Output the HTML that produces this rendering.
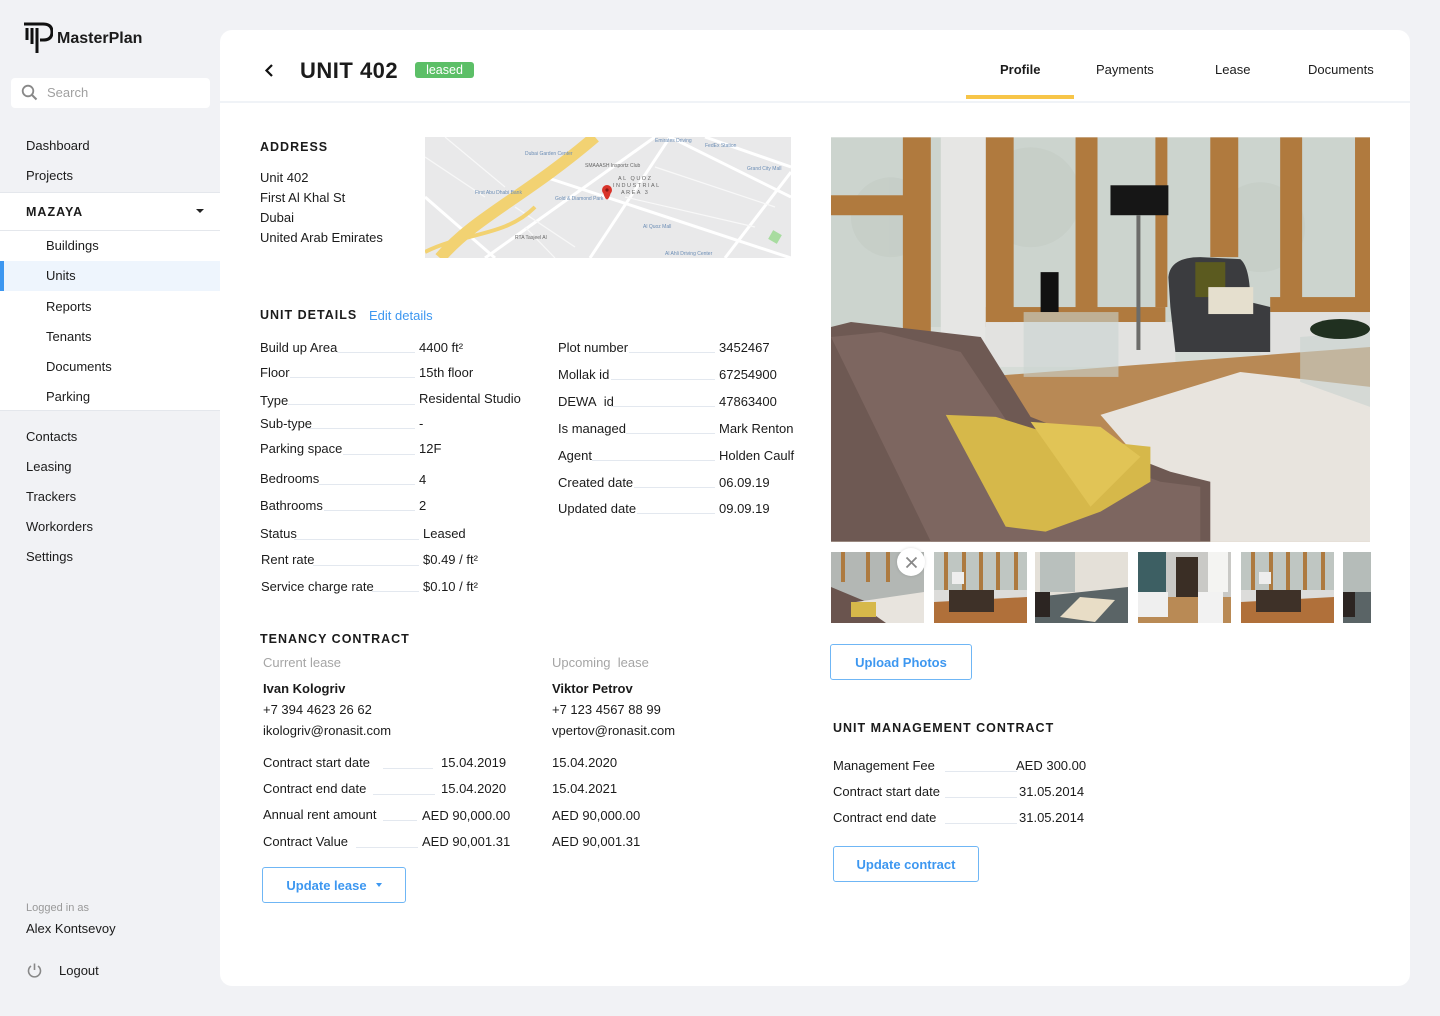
<!DOCTYPE html>
<html><head><meta charset="utf-8">
<style>
*{margin:0;padding:0;box-sizing:border-box}
body{width:1440px;height:1016px;background:#f1f2f5;font-family:"Liberation Sans",Arial,sans-serif;color:#1b1b1b;position:relative;overflow:hidden}
.t{position:absolute;white-space:nowrap;font-size:13px;line-height:18px;margin-top:1px}
.h{position:absolute;white-space:nowrap;font-size:12.5px;font-weight:bold;letter-spacing:1px;line-height:18px;margin-top:1px}
.ln{position:absolute;height:1px;background:#e3e8ef}
.btn{position:absolute;border:1px solid #6fb6f5;border-radius:3px;color:#3d97f0;font-weight:bold;font-size:13px;display:flex;align-items:center;justify-content:center;background:#fff}
.card{position:absolute;left:220px;top:30px;width:1190px;height:956px;background:#fff;border-radius:12px}
.g{color:#9a9a9a}
</style></head><body>

<!-- Sidebar -->
<svg style="position:absolute;left:23px;top:22px" width="30" height="32" viewBox="0 0 30 32">
<path d="M1 2 H20 Q29 2 29 10 Q29 18 20 18 H17" fill="none" stroke="#111" stroke-width="3"/>
<path d="M4 6 V18 M9 6 V22 M14 6 V31" stroke="#111" stroke-width="3"/>
</svg>
<div class="t" style="left:57px;top:29px;font-size:16px;font-weight:bold">MasterPlan</div>
<div style="position:absolute;left:11px;top:78px;width:199px;height:30px;background:#fff;border-radius:4px"></div>
<svg style="position:absolute;left:21px;top:84px" width="17" height="17" viewBox="0 0 17 17"><circle cx="7" cy="7" r="5.3" fill="none" stroke="#888" stroke-width="1.8"/><path d="M11 11 L15.5 15.5" stroke="#888" stroke-width="2"/></svg>
<div class="t g" style="left:47px;top:83px;color:#a0a0a0">Search</div>
<div class="t" style="left:26px;top:136px">Dashboard</div>
<div class="t" style="left:26px;top:166px">Projects</div>
<div style="position:absolute;left:0;top:192px;width:220px;height:219px;background:#fff;border-top:1px solid #e4e7ec;border-bottom:1px solid #e4e7ec"></div>
<div style="position:absolute;left:0;top:230px;width:220px;height:1px;background:#e4e7ec"></div>
<div class="h" style="left:26px;top:202px">MAZAYA</div>
<div style="position:absolute;left:196px;top:209px;border-left:4px solid transparent;border-right:4px solid transparent;border-top:4px solid #222"></div>
<div style="position:absolute;left:0;top:261px;width:220px;height:30px;background:#eef5fd"></div>
<div style="position:absolute;left:0;top:261px;width:4px;height:30px;background:#3d97f0"></div>
<div class="t" style="left:46px;top:236px">Buildings</div>
<div class="t" style="left:46px;top:266px">Units</div>
<div class="t" style="left:46px;top:297px">Reports</div>
<div class="t" style="left:46px;top:327px">Tenants</div>
<div class="t" style="left:46px;top:357px">Documents</div>
<div class="t" style="left:46px;top:387px">Parking</div>
<div class="t" style="left:26px;top:427px">Contacts</div>
<div class="t" style="left:26px;top:457px">Leasing</div>
<div class="t" style="left:26px;top:487px">Trackers</div>
<div class="t" style="left:26px;top:517px">Workorders</div>
<div class="t" style="left:26px;top:547px">Settings</div>
<div class="t" style="left:26px;top:898px;font-size:11px;color:#999">Logged in as</div>
<div class="t" style="left:26px;top:919px">Alex Kontsevoy</div>
<svg style="position:absolute;left:26px;top:962px" width="17" height="17" viewBox="0 0 17 17"><path d="M5 4 A6 6 0 1 0 12 4" fill="none" stroke="#888" stroke-width="1.6"/><path d="M8.5 1.5 V8" stroke="#888" stroke-width="1.6"/></svg>
<div class="t" style="left:59px;top:961px">Logout</div>

<!-- Card -->
<div class="card"></div>
<div style="position:absolute;left:220px;top:101px;width:1190px;height:2px;background:#f0f3f7"></div>
<svg style="position:absolute;left:263px;top:63px" width="12" height="15" viewBox="0 0 12 15"><path d="M9 2 L3.5 7.5 L9 13" fill="none" stroke="#111" stroke-width="2.2"/></svg>
<div class="t" style="left:300px;top:56px;font-size:22px;line-height:28px;font-weight:bold;letter-spacing:0.5px">UNIT 402</div>
<div style="position:absolute;left:415px;top:62px;width:59px;height:16px;background:#5cbf67;border-radius:3px;color:#fff;font-size:12.5px;line-height:16px;text-align:center">leased</div>
<div class="t" style="left:1000px;top:60px;font-weight:bold">Profile</div>
<div class="t" style="left:1096px;top:60px">Payments</div>
<div class="t" style="left:1215px;top:60px">Lease</div>
<div class="t" style="left:1308px;top:60px">Documents</div>
<div style="position:absolute;left:966px;top:95px;width:108px;height:4px;background:#f7c548"></div>

<!-- Address -->
<div class="h" style="left:260px;top:137px">ADDRESS</div>
<div class="t" style="left:260px;top:168px">Unit 402</div>
<div class="t" style="left:260px;top:188px">First Al Khal St</div>
<div class="t" style="left:260px;top:208px">Dubai</div>
<div class="t" style="left:260px;top:228px">United Arab Emirates</div>
<svg style="position:absolute;left:425px;top:137px" width="366" height="121" viewBox="0 0 366 121">
<rect width="366" height="121" fill="#e9e9ea"/>
<g stroke="#fff" stroke-width="3" fill="none">
<path d="M60 121 L230 0"/><path d="M165 121 L245 0"/><path d="M300 121 L366 35"/>
<path d="M0 60 L70 121"/><path d="M120 40 L366 121"/><path d="M245 0 L366 60"/>
<path d="M280 0 L366 30"/>
</g>
<g stroke="#f8f8f8" stroke-width="1.2" fill="none">
<path d="M0 20 L60 60"/><path d="M20 0 L80 50"/><path d="M90 70 L150 110"/><path d="M200 60 L330 90"/><path d="M230 30 L350 70"/><path d="M100 90 L130 121"/>
</g>
<path d="M15 121 C50 80 100 60 170 0" fill="none" stroke="#f2d272" stroke-width="12"/>
<path d="M0 115 C40 95 80 100 110 70" fill="none" stroke="#f2d272" stroke-width="4"/>
<rect x="345" y="95" width="10" height="10" fill="#a8dca0" transform="rotate(30 350 100)"/>
<g font-family="Liberation Sans" font-size="5" fill="#6b8db5">
<text x="100" y="18">Dubai Garden Center</text><text x="50" y="57">First Abu Dhabi Bank</text>
<text x="130" y="63">Gold &amp; Diamond Park</text><text x="230" y="5">Emirates Driving</text>
<text x="280" y="10">FedEx Station</text><text x="322" y="33">Grand City Mall</text>
<text x="218" y="91">Al Quoz Mall</text><text x="240" y="118">Al Ahli Driving Center</text>
</g>
<g font-family="Liberation Sans" font-size="5" fill="#666"><text x="160" y="30">SMAAASH Insportz Club</text><text x="90" y="102">RTA Tasjeel Al</text>
<text x="193" y="43" letter-spacing="1.5" font-size="5.5">AL QUOZ</text><text x="188" y="50" letter-spacing="1.5" font-size="5.5">INDUSTRIAL</text><text x="196" y="57" letter-spacing="1.5" font-size="5.5">AREA 3</text></g>
<path d="M178 55 Q182 70 186 55" fill="#d9342b"/>
<circle cx="182" cy="53" r="5" fill="#d9342b"/><circle cx="182" cy="53" r="1.6" fill="#8a1a15"/>
</svg>

<!-- Unit details -->
<div class="h" style="left:260px;top:305px">UNIT DETAILS</div>
<div class="t" style="left:369px;top:306px;color:#3d97f0">Edit details</div>

<div class="t" style="left:260px;top:338px">Build up Area</div><div class="ln" style="left:337px;top:352px;width:78px"></div><div class="t" style="left:419px;top:338px">4400 ft²</div>
<div class="t" style="left:260px;top:363px">Floor</div><div class="ln" style="left:290px;top:377px;width:125px"></div><div class="t" style="left:419px;top:363px">15th floor</div>
<div class="t" style="left:260px;top:391px">Type</div><div class="ln" style="left:288px;top:404px;width:127px"></div><div class="t" style="left:419px;top:389px">Residental Studio</div>
<div class="t" style="left:260px;top:414px">Sub-type</div><div class="ln" style="left:306px;top:428px;width:109px"></div><div class="t" style="left:419px;top:414px">-</div>
<div class="t" style="left:260px;top:439px">Parking space</div><div class="ln" style="left:343px;top:454px;width:72px"></div><div class="t" style="left:419px;top:439px">12F</div>
<div class="t" style="left:260px;top:469px">Bedrooms</div><div class="ln" style="left:319px;top:484px;width:96px"></div><div class="t" style="left:419px;top:470px">4</div>
<div class="t" style="left:260px;top:496px">Bathrooms</div><div class="ln" style="left:324px;top:510px;width:91px"></div><div class="t" style="left:419px;top:496px">2</div>
<div class="t" style="left:260px;top:524px">Status</div><div class="ln" style="left:294px;top:539px;width:125px"></div><div class="t" style="left:423px;top:524px">Leased</div>
<div class="t" style="left:261px;top:550px">Rent rate</div><div class="ln" style="left:313px;top:565px;width:106px"></div><div class="t" style="left:423px;top:550px">$0.49 / ft²</div>
<div class="t" style="left:261px;top:577px">Service charge rate</div><div class="ln" style="left:372px;top:591px;width:47px"></div><div class="t" style="left:423px;top:577px">$0.10 / ft²</div>

<div class="t" style="left:558px;top:338px">Plot number</div><div class="ln" style="left:629px;top:352px;width:86px"></div><div class="t" style="left:719px;top:338px">3452467</div>
<div class="t" style="left:558px;top:365px">Mollak id</div><div class="ln" style="left:611px;top:379px;width:104px"></div><div class="t" style="left:719px;top:365px">67254900</div>
<div class="t" style="left:558px;top:392px">DEWA&nbsp; id</div><div class="ln" style="left:611px;top:406px;width:104px"></div><div class="t" style="left:719px;top:392px">47863400</div>
<div class="t" style="left:558px;top:419px">Is managed</div><div class="ln" style="left:626px;top:433px;width:89px"></div><div class="t" style="left:719px;top:419px">Mark Renton</div>
<div class="t" style="left:558px;top:446px">Agent</div><div class="ln" style="left:592px;top:460px;width:123px"></div><div class="t" style="left:719px;top:446px">Holden Caulf</div>
<div class="t" style="left:558px;top:473px">Created date</div><div class="ln" style="left:634px;top:487px;width:81px"></div><div class="t" style="left:719px;top:473px">06.09.19</div>
<div class="t" style="left:558px;top:499px">Updated date</div><div class="ln" style="left:637px;top:513px;width:78px"></div><div class="t" style="left:719px;top:499px">09.09.19</div>

<!-- Tenancy -->
<div class="h" style="left:260px;top:629px">TENANCY CONTRACT</div>
<div class="t" style="left:263px;top:653px;color:#a5a5a5">Current lease</div>
<div class="t" style="left:552px;top:653px;color:#a5a5a5">Upcoming&nbsp; lease</div>
<div class="t" style="left:263px;top:679px;font-weight:bold">Ivan Kologriv</div>
<div class="t" style="left:552px;top:679px;font-weight:bold">Viktor Petrov</div>
<div class="t" style="left:263px;top:700px">+7 394 4623 26 62</div>
<div class="t" style="left:552px;top:700px">+7 123 4567 88 99</div>
<div class="t" style="left:263px;top:721px">ikologriv@ronasit.com</div>
<div class="t" style="left:552px;top:721px">vpertov@ronasit.com</div>
<div class="t" style="left:263px;top:753px">Contract start date</div><div class="ln" style="left:383px;top:768px;width:50px"></div><div class="t" style="left:441px;top:753px">15.04.2019</div><div class="t" style="left:552px;top:753px">15.04.2020</div>
<div class="t" style="left:263px;top:779px">Contract end date</div><div class="ln" style="left:373px;top:794px;width:62px"></div><div class="t" style="left:441px;top:779px">15.04.2020</div><div class="t" style="left:552px;top:779px">15.04.2021</div>
<div class="t" style="left:263px;top:805px">Annual rent amount</div><div class="ln" style="left:383px;top:820px;width:34px"></div><div class="t" style="left:422px;top:806px">AED 90,000.00</div><div class="t" style="left:552px;top:806px">AED 90,000.00</div>
<div class="t" style="left:263px;top:832px">Contract Value</div><div class="ln" style="left:356px;top:847px;width:62px"></div><div class="t" style="left:422px;top:832px">AED 90,001.31</div><div class="t" style="left:552px;top:832px">AED 90,001.31</div>
<div class="btn" style="left:262px;top:867px;width:144px;height:36px">Update lease<span style="display:inline-block;margin-left:9px;border-left:3.5px solid transparent;border-right:3.5px solid transparent;border-top:4px solid #3d97f0"></span></div>

<!-- Photo -->
<svg style="position:absolute;left:831px;top:137px" width="539" height="405" viewBox="0 0 540 405">
<rect width="540" height="405" fill="#d6dcd7"/>
<rect x="0" y="0" width="540" height="190" fill="#ccd4ce"/>
<g fill="#c3cbc5" opacity=".6"><circle cx="60" cy="80" r="40"/><circle cx="200" cy="60" r="50"/><circle cx="430" cy="90" r="45"/></g>
<g fill="#b07a3e">
<rect x="0" y="58" width="78" height="20"/><rect x="72" y="0" width="28" height="195"/>
<rect x="155" y="0" width="28" height="190"/><rect x="245" y="0" width="22" height="175"/>
<rect x="325" y="0" width="12" height="170"/><rect x="380" y="0" width="28" height="120"/>
<rect x="450" y="0" width="22" height="175"/><rect x="525" y="0" width="15" height="180"/>
<rect x="155" y="170" width="180" height="15"/><rect x="440" y="160" width="100" height="15"/>
</g>
<rect x="110" y="0" width="45" height="240" fill="#e6e6e4"/>
<rect x="155" y="185" width="190" height="45" fill="#e2e2e0"/>
<rect x="430" y="175" width="110" height="55" fill="#e0e0de"/>
<polygon points="150,240 540,210 540,405 0,405" fill="#b88955"/>
<polygon points="270,278 410,235 540,250 540,405 380,405" fill="#e8e4de"/>
<rect x="280" y="48" width="58" height="30" fill="#161616"/>
<rect x="306" y="78" width="4" height="135" fill="#6c6c6a"/>
<rect x="210" y="135" width="18" height="40" fill="#111"/>
<rect x="193" y="175" width="95" height="65" fill="#c9d3d0" opacity=".6"/>
<path d="M338 140 Q340 120 370 120 L410 122 Q420 130 420 165 L440 170 L440 215 L345 215 L340 170 Z" fill="#3b3c3f"/>
<rect x="365" y="125" width="30" height="35" fill="#5b5a1f"/>
<rect x="378" y="150" width="45" height="27" fill="#e5dfce"/>
<path d="M470 200 L540 195 L540 270 L470 245Z" fill="#c8d2cf" opacity=".6"/>
<ellipse cx="510" cy="192" rx="30" ry="10" fill="#203020"/>
<path d="M0 190 L20 185 L150 200 L200 280 L340 335 L380 345 L380 405 L0 405 Z" fill="#6e5953"/>
<path d="M0 200 L50 195 L130 215 L180 290 L330 345 L370 350 L370 405 L100 405 Z" fill="#7d6660"/>
<path d="M115 278 L165 280 L230 300 L320 310 L320 345 L270 375 L215 395 L175 390 Z" fill="#d6b84a"/>
<path d="M200 285 L270 290 L310 320 L260 370 Z" fill="#e1c456"/>
</svg>

<!-- Thumbnails -->
<svg style="position:absolute;left:831px;top:552px" width="540" height="71" viewBox="0 0 540 71">
<defs>
<g id="th1"><rect width="93" height="71" fill="#bfc6c2"/><g fill="#ad7a40"><rect x="10" y="0" width="4" height="40"/><rect x="28" y="0" width="4" height="40"/><rect x="45" y="0" width="4" height="40"/><rect x="62" y="0" width="4" height="40"/><rect x="80" y="0" width="4" height="40"/></g><rect x="0" y="38" width="93" height="12" fill="#dcdcda"/><polygon points="0,50 93,45 93,71 0,71" fill="#b0703a"/><rect x="15" y="38" width="45" height="22" fill="#3e3128"/><rect x="18" y="20" width="12" height="12" fill="#eee"/></g>
</defs>
<rect x="0" width="93" height="71" fill="#b3b7b4"/>
<polygon points="0,35 60,60 60,71 0,71" fill="#6a544e"/><polygon points="25,50 93,40 93,71 55,71" fill="#e8e4de"/><rect x="20" y="50" width="25" height="15" fill="#d6b84a"/>
<g fill="#ad7a40"><rect x="10" y="0" width="4" height="30"/><rect x="35" y="0" width="4" height="30"/><rect x="55" y="0" width="4" height="30"/></g>
<use href="#th1" x="103"/>
<g transform="translate(204,0)"><rect width="93" height="71" fill="#e4e0d8"/><rect x="5" y="0" width="35" height="40" fill="#b9c0bd"/><polygon points="0,45 93,35 93,71 0,71" fill="#5a6466"/><polygon points="25,65 45,45 80,48 60,70" fill="#e8ddc6"/><rect x="0" y="40" width="15" height="25" fill="#2c2522"/></g>
<g transform="translate(307,0)"><rect width="93" height="71" fill="#c9c9c6"/><rect x="0" y="0" width="28" height="71" fill="#3d5f63"/><rect x="38" y="5" width="22" height="40" fill="#3a2e25"/><polygon points="0,71 93,71 93,45 0,45" fill="#b98a55"/><rect x="0" y="40" width="30" height="25" fill="#efefef"/><rect x="60" y="40" width="25" height="31" fill="#f2f2f2"/><rect x="70" y="0" width="20" height="40" fill="#f4f4f2"/></g>
<use href="#th1" x="410"/>
<g transform="translate(512,0)"><rect width="28" height="71" fill="#b5bcb9"/><rect x="0" y="40" width="28" height="31" fill="#5a6466"/><rect x="0" y="40" width="12" height="25" fill="#2c2522"/></g>
</svg>
<div style="position:absolute;left:897px;top:548px;width:28px;height:28px;border-radius:50%;background:#fff;box-shadow:0 0 3px rgba(0,0,0,.15)"></div>
<svg style="position:absolute;left:905px;top:556px" width="13" height="13" viewBox="0 0 13 13"><path d="M1.5 1.5 L11.5 11.5 M11.5 1.5 L1.5 11.5" stroke="#888" stroke-width="1.8"/></svg>
<div class="btn" style="left:830px;top:644px;width:142px;height:36px">Upload Photos</div>

<!-- Management -->
<div class="h" style="left:833px;top:718px">UNIT MANAGEMENT CONTRACT</div>
<div class="t" style="left:833px;top:756px">Management Fee</div><div class="ln" style="left:945px;top:771px;width:72px"></div><div class="t" style="left:1016px;top:756px">AED 300.00</div>
<div class="t" style="left:833px;top:782px">Contract start date</div><div class="ln" style="left:945px;top:797px;width:72px"></div><div class="t" style="left:1019px;top:782px">31.05.2014</div>
<div class="t" style="left:833px;top:808px">Contract end date</div><div class="ln" style="left:945px;top:823px;width:72px"></div><div class="t" style="left:1019px;top:808px">31.05.2014</div>
<div class="btn" style="left:833px;top:846px;width:146px;height:36px">Update contract</div>
</body></html>
